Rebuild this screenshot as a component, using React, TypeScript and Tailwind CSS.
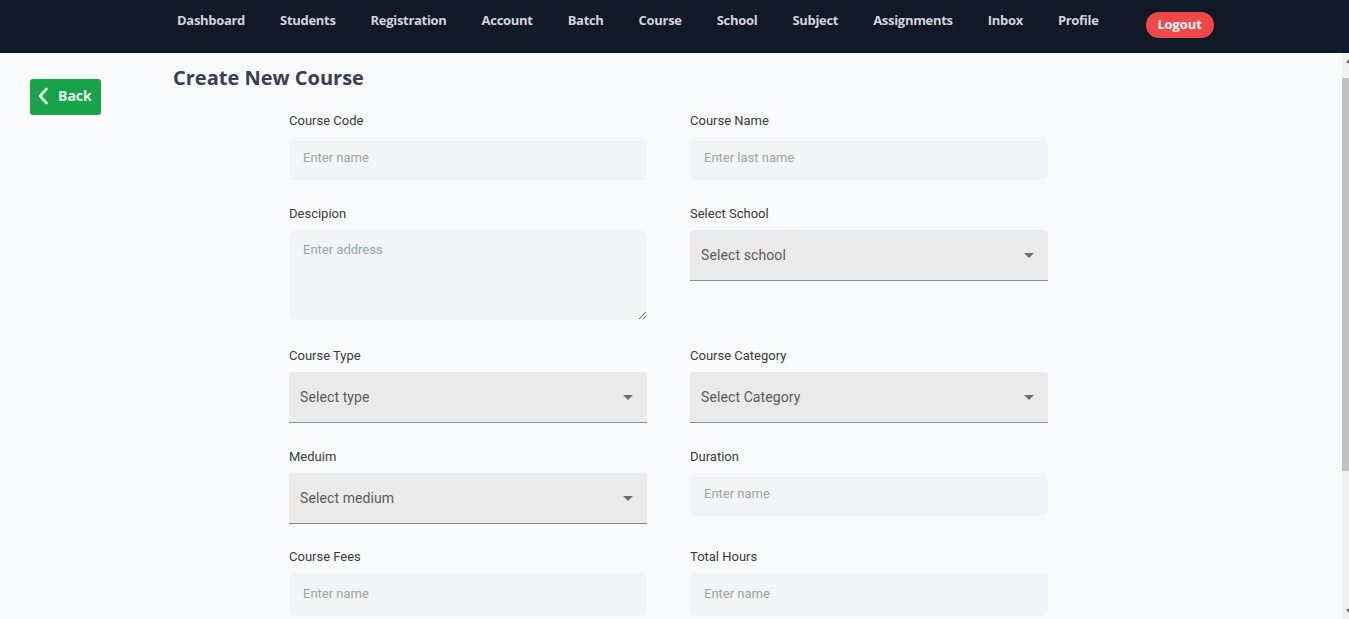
import React from "react";

const navItems = [
  "Dashboard",
  "Students",
  "Registration",
  "Account",
  "Batch",
  "Course",
  "School",
  "Subject",
  "Assignments",
  "Inbox",
  "Profile",
];

function Label({ children }: { children: React.ReactNode }) {
  return (
    <label className="mb-[8px] block pt-[1px] text-[13px] leading-[16px] text-[#3a3a3a]">
      {children}
    </label>
  );
}

function TextInput({ placeholder }: { placeholder: string }) {
  return (
    <input
      placeholder={placeholder}
      className="block h-[43px] w-full rounded-md bg-[#f3f4f6] px-[14px] pb-[2px] text-[13px] text-[#374151] outline-none placeholder:text-[#9ca3af]"
    />
  );
}

function SelectBox({ text }: { text: string }) {
  return (
    <div className="flex h-[51px] w-full items-center justify-between rounded-t-[4px] border-b border-[#8d8d8d] bg-[#eaeaeb] pl-[11px] pr-[7px]">
      <span className="text-[14px] tracking-[0.1px] text-[#5a5a5a]">{text}</span>
      <svg width="24" height="24" viewBox="0 0 24 24" className="fill-[#6e6e6e]">
        <path d="M7 10l5 5 5-5z" />
      </svg>
    </div>
  );
}

function FakeScrollbar() {
  return (
    <div className="flex w-[7px] shrink-0 flex-col bg-[#f1f1f1]">
      <div className="flex h-[16px] items-center justify-end">
        <svg width="4" height="6" viewBox="0 0 4 6">
          <path d="M4 1 L1 5 L4 5 Z" fill="#606060" />
        </svg>
      </div>
      <div className="h-[9px]" />
      <div className="h-[393px] bg-[#c1c1c1]" />
      <div className="flex-1" />
      <div className="flex h-[16px] items-center justify-end">
        <svg width="4" height="6" viewBox="0 0 4 6">
          <path d="M4 5 L1 1 L4 1 Z" fill="#606060" />
        </svg>
      </div>
    </div>
  );
}

export default function App() {
  return (
    <div
      className="flex h-screen flex-col bg-[#f9fafb]"
      style={{ fontFamily: "Roboto, 'Liberation Sans', Arial, sans-serif" }}
    >
      <nav className="h-[53px] shrink-0 bg-[#111827]">
        <div
          className="flex items-start pl-[177px] pt-[10px]"
          style={{ fontFamily: "'Open Sans', 'Noto Sans', sans-serif" }}
        >
          <ul className="flex gap-[35px]">
            {navItems.map((n) => (
              <li
                key={n}
                className="text-[13px] font-bold leading-[20px] tracking-[-0.3px] text-[#d1d5db]"
              >
                {n}
              </li>
            ))}
          </ul>
          <button className="ml-[47px] mt-[2px] h-[26px] w-[68px] rounded-full bg-[#f04848] text-[13px] font-bold tracking-[-0.1px] text-white">
            Logout
          </button>
        </div>
      </nav>
      <div className="flex min-h-0 flex-1">
        <main className="min-w-0 flex-1 overflow-y-auto">
          <div className="flex pb-[80px]">
            <div className="w-[173px] shrink-0 pl-[30px] pt-[26px]">
              <button
                className="flex h-[36px] w-[71px] items-center gap-[9px] rounded-[3px] bg-[#16a34a] pb-[3px] pl-[7px] text-[14px] font-bold text-[#e8f5ec]"
                style={{ fontFamily: "'Open Sans', 'Noto Sans', sans-serif" }}
              >
                <svg width="12" height="18" viewBox="0 0 12 18" fill="none">
                  <path
                    d="M9.5 2 L3 9 L9.5 16"
                    stroke="#e8f5ec"
                    strokeWidth="2.6"
                    strokeLinecap="round"
                    strokeLinejoin="round"
                  />
                </svg>
                Back
              </button>
            </div>
            <div className="flex-1 pt-[11px]">
              <h1
                className="text-[20px] font-bold leading-[28px] text-[#374151]"
                style={{ fontFamily: "'Open Sans', 'Noto Sans', sans-serif" }}
              >
                Create New Course
              </h1>
              <form className="ml-[116px] mt-[20px] grid w-[759px] grid-cols-[358px_358px] gap-x-[43px] gap-y-[25px]">
                <div>
                  <Label>Course Code</Label>
                  <TextInput placeholder="Enter name" />
                </div>
                <div>
                  <Label>Course Name</Label>
                  <TextInput placeholder="Enter last name" />
                </div>
                <div>
                  <Label>Descipion</Label>
                  <textarea
                    placeholder="Enter address"
                    className="mb-[2px] block h-[90px] w-full rounded-md bg-[#f3f4f6] px-[14px] pt-[12px] text-[13px] leading-[16px] text-[#374151] outline-none placeholder:text-[#9ca3af]"
                  />
                </div>
                <div>
                  <Label>Select School</Label>
                  <SelectBox text="Select school" />
                </div>
                <div>
                  <Label>Course Type</Label>
                  <SelectBox text="Select type" />
                </div>
                <div>
                  <Label>Course Category</Label>
                  <SelectBox text="Select Category" />
                </div>
                <div>
                  <Label>Meduim</Label>
                  <SelectBox text="Select medium" />
                </div>
                <div>
                  <Label>Duration</Label>
                  <TextInput placeholder="Enter name" />
                </div>
                <div className="-mt-px">
                  <Label>Course Fees</Label>
                  <TextInput placeholder="Enter name" />
                </div>
                <div className="-mt-px">
                  <Label>Total Hours</Label>
                  <TextInput placeholder="Enter name" />
                </div>
              </form>
            </div>
          </div>
        </main>
        <FakeScrollbar />
      </div>
    </div>
  );
}
